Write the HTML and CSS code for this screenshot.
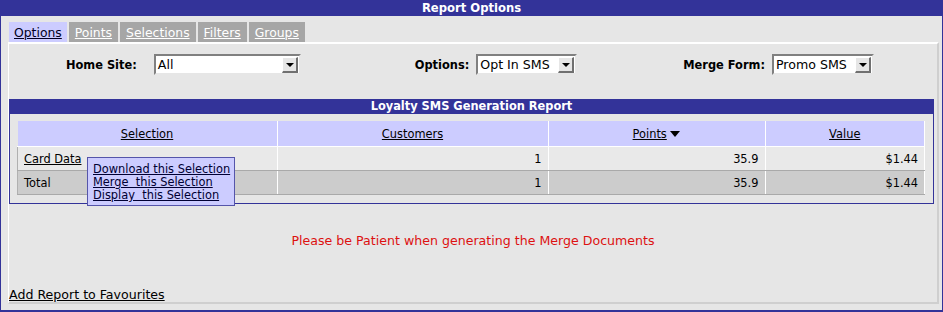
FILE: index.html
```html
<!DOCTYPE html>
<html lang="en">
<head>
    <meta charset="UTF-8">
    <title>Report Options</title>
    <link rel="stylesheet" href="styles.css">
</head>
<body>
    <div class="frame">
        <div class="title-bar">Report Options</div>

        <div class="tabs">
            <a class="tab active" href="#">Options</a>
            <a class="tab" href="#">Points</a>
            <a class="tab" href="#">Selections</a>
            <a class="tab" href="#">Filters</a>
            <a class="tab" href="#">Groups</a>
        </div>

        <div class="panel">
            <div class="form-row">
                <div class="field field-site">
                    <label>Home Site:</label>
                    <div class="select select-site"><span>All</span><span class="arrow"></span></div>
                </div>
                <div class="field field-options">
                    <label>Options:</label>
                    <div class="select select-options"><span>Opt In SMS</span><span class="arrow"></span></div>
                </div>
                <div class="field field-merge">
                    <label>Merge Form:</label>
                    <div class="select select-merge"><span>Promo SMS</span><span class="arrow"></span></div>
                </div>
            </div>

            <div class="report-box">
                <div class="report-title">Loyalty SMS Generation Report</div>
                <table class="report-table">
                    <thead>
                        <tr>
                            <th class="col-sel"><a href="#">Selection</a></th>
                            <th class="col-cust"><a href="#">Customers</a></th>
                            <th class="col-pts"><a href="#">Points</a> <span class="sort-down"></span></th>
                            <th class="col-val"><a href="#">Value</a></th>
                        </tr>
                    </thead>
                    <tbody>
                        <tr class="row-data">
                            <td><a href="#">Card Data</a></td>
                            <td class="num">1</td>
                            <td class="num">35.9</td>
                            <td class="num">$1.44</td>
                        </tr>
                        <tr class="row-total">
                            <td>Total</td>
                            <td class="num">1</td>
                            <td class="num">35.9</td>
                            <td class="num">$1.44</td>
                        </tr>
                    </tbody>
                </table>

                <!-- popup menu for the selection -->
                <div class="popup-menu">
                    <a href="#">Download this Selection</a>
                    <a href="#">Merge&nbsp; this Selection</a>
                    <a href="#">Display&nbsp; this Selection</a>
                </div>
            </div>

            <p class="patient-msg">Please be Patient when generating the Merge Documents</p>

            <a class="fav-link" href="#">Add Report to Favourites</a>
        </div>
    </div>
</body>
</html>
```

FILE: styles.css
```css
body {
    margin: 0;
    font-family: "DejaVu Sans", Verdana, sans-serif;
    font-size: 12.6px;
    color: #000;
    background-color: #333399;
}
a {
    color: #000;
}
.frame {
    height: 310px;
    margin: 0 1px 0 0;
    border-left: 1px solid #333399;
    border-bottom: 2px solid #333399;
    background-color: #e6e6e6;
    overflow: hidden;
}
.title-bar {
    height: 16px;
    line-height: 16px;
    background-color: #333399;
    color: #fff;
    font-weight: bold;
    font-size: 11.6px;
    text-align: center;
}
.tabs {
    display: flex;
    gap: 2px;
    padding: 6px 0 0 8px;
}
.tab {
    display: block;
    height: 20px;
    line-height: 21px;
    padding: 0 6px;
    background-color: #a6a6a6;
    color: #fff;
    font-size: 12.4px;
}
.tab.active {
    padding: 0 5px;
    background-color: #ccccff;
    color: #000022;
}
.panel {
    position: relative;
    height: 258px;
    margin: 0 3px 0 7px;
    border-top: 2px solid #fff;
    border-left: 1px solid #fff;
    border-right: 2px solid #cfcfcf;
    border-bottom: 2px solid #cfcfcf;
}
.form-row {
    display: flex;
    align-items: center;
    height: 21px;
    padding: 10px 0 0 57px;
}
.field {
    display: flex;
    align-items: center;
}
.field label {
    font-weight: bold;
    font-size: 11.4px;
    margin-right: 7px;
}
.field-site label {
    margin-right: 17px;
}
.field-options {
    margin-left: 114px;
}
.field-merge {
    margin-left: 106px;
}
.select {
    display: flex;
    align-items: center;
    justify-content: space-between;
    height: 17px;
    background-color: #fff;
    border-top: 2px solid #808080;
    border-left: 2px solid #808080;
    border-right: 2px solid #e6e6e6;
    border-bottom: 2px solid #e6e6e6;
    padding-left: 2px;
}
.select-site {
    width: 141px;
}
.select-options {
    width: 95px;
}
.select-merge {
    width: 96px;
}
.arrow {
    position: relative;
    width: 13px;
    height: 13px;
    margin-right: 1px;
    background-color: #e6e6e6;
    border-top: 1px solid #fff;
    border-left: 1px solid #fff;
    border-right: 2px solid #707070;
    border-bottom: 2px solid #707070;
}
.arrow::after {
    content: "";
    position: absolute;
    left: 3px;
    top: 5px;
    border-left: 4px solid transparent;
    border-right: 4px solid transparent;
    border-top: 4px solid #000;
}
.report-box {
    position: relative;
    margin: 24px 3px 0 0;
    border: 1px solid #333399;
    border-top: none;
    padding-bottom: 8px;
}
.report-title {
    height: 15px;
    line-height: 15px;
    background-color: #333399;
    color: #fff;
    font-weight: bold;
    font-size: 11.4px;
    text-align: center;
}
.report-table {
    width: 908px;
    margin: 7px 0 0 7px;
    border-collapse: collapse;
    font-size: 11.4px;
}
.report-table th,
.report-table td {
    border-right: 1px solid #fff;
    border-bottom: 1px solid #a9a9a9;
    padding: 0 6px;
    height: 23px;
}
.report-table th {
    background-color: #ccccff;
    font-weight: normal;
    height: 25px;
    border-bottom: 1px solid #fff;
}
.report-table td {
    border-left: 1px solid #b0b0b0;
}
.report-table .col-sel {
    width: 247px;
}
.report-table .col-cust {
    width: 258px;
}
.report-table .col-pts {
    width: 204px;
}
.row-data td {
    background-color: #e9e9e9;
}
.row-total td {
    background-color: #cccccc;
}
.num {
    text-align: right;
}
.sort-down {
    display: inline-block;
    border-left: 5px solid transparent;
    border-right: 5px solid transparent;
    border-top: 6px solid #000;
    vertical-align: middle;
}
.popup-menu {
    position: absolute;
    left: 77px;
    top: 58px;
    width: 138px;
    padding: 5px 3px 3px 5px;
    background-color: #ccccff;
    border: 1px solid #5555aa;
    font-size: 11.4px;
    line-height: 13px;
}
.popup-menu a {
    display: block;
    color: #000033;
}
.patient-msg {
    margin: 29px 0 0;
    text-align: center;
    color: #dd1111;
}
.fav-link {
    position: absolute;
    left: 0;
    bottom: 0;
}
```
